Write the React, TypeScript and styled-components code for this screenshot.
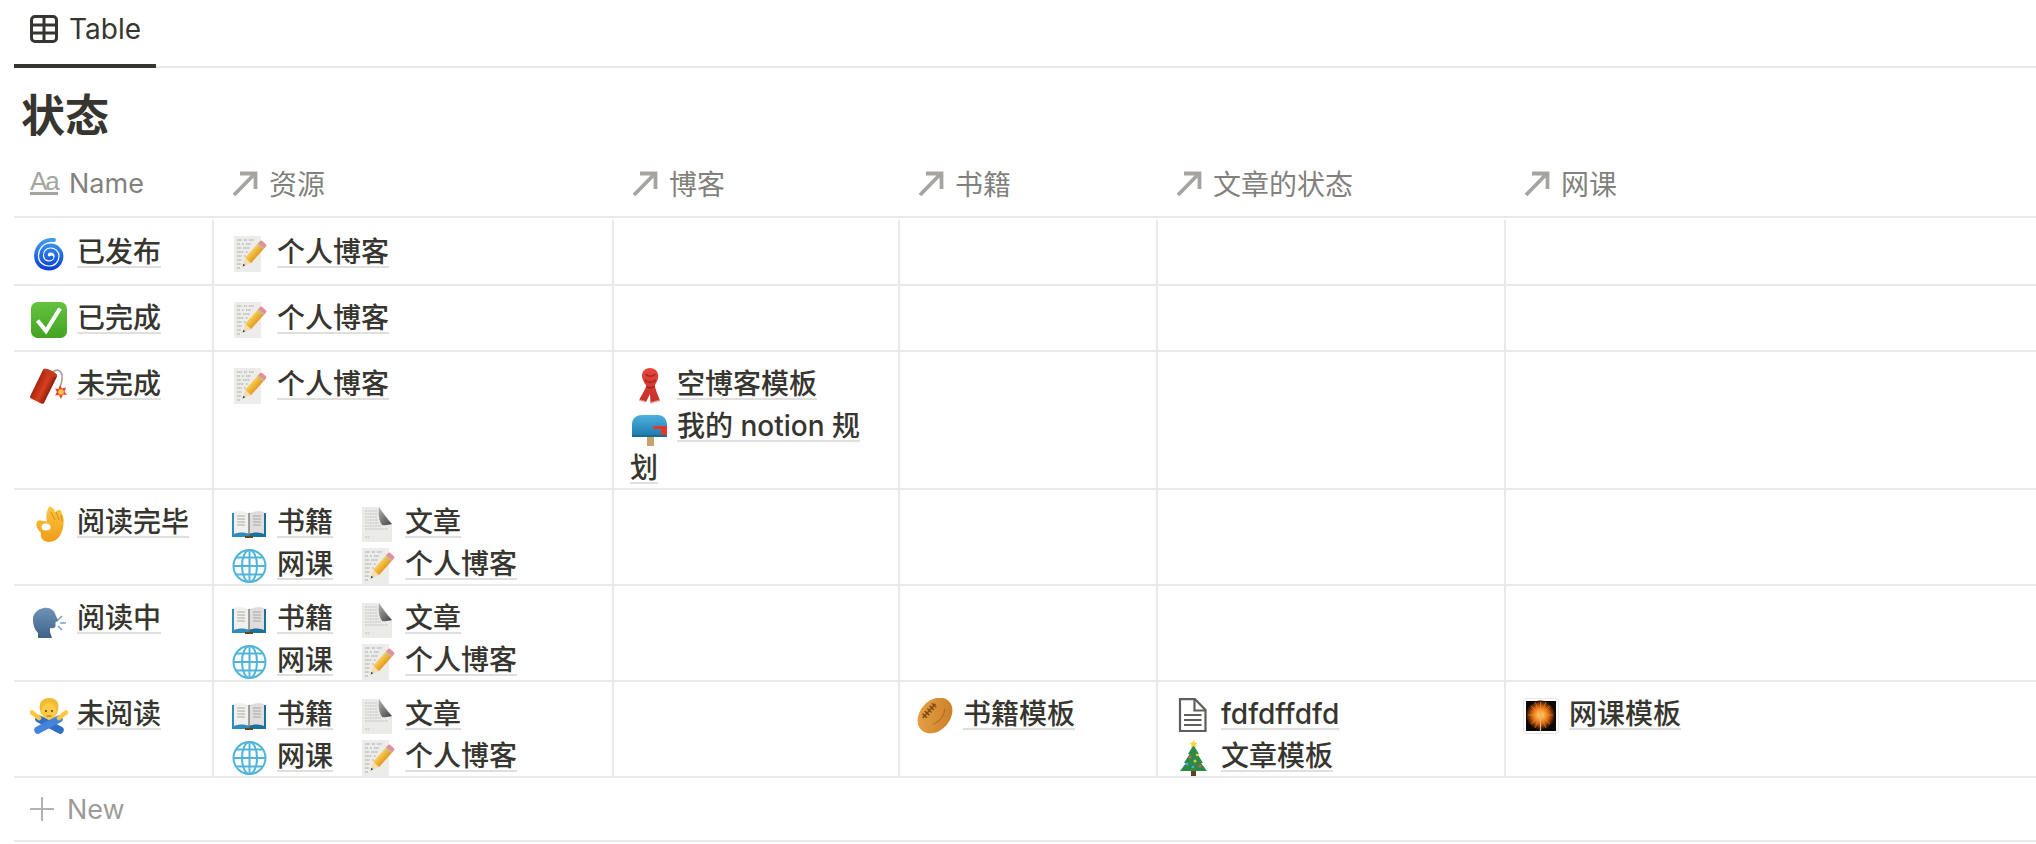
import React from "react";
import styled, { createGlobalStyle } from "styled-components";

const LINE = "#e9e9e7";
const COLS = "200px 400px 286px 258px 348px 1fr";

const Global = createGlobalStyle`
  html, body { margin: 0; padding: 0; background: #fff; }
  body {
    font-family: Inter, "Noto Sans CJK SC", "Noto Sans", sans-serif;
    color: #37352f;
    overflow: hidden;
  }
`;

const Page = styled.div`
  display: flex;
  flex-direction: column;
  padding-left: 14px;
`;

const TabBar = styled.div`
  display: flex;
  height: 68px;
  box-sizing: border-box;
  border-bottom: 2px solid ${LINE};
`;

const Tab = styled.div`
  display: flex;
  align-items: center;
  gap: 11px;
  width: 142px;
  height: 68px;
  box-sizing: border-box;
  padding: 0 0 7px 16px;
  border-bottom: 4px solid #37352f;
  font-size: 28px;
  line-height: 36px;
`;

const Title = styled.h1`
  margin: 0;
  padding: 22px 0 10px 7px;
  font-size: 44px;
  line-height: 52px;
  font-weight: 700;
`;

const HeaderRow = styled.div`
  display: grid;
  grid-template-columns: ${COLS};
  height: 66px;
  box-sizing: border-box;
  border-bottom: 2px solid ${LINE};
`;

const HeaderCell = styled.div<{ $latin?: boolean }>`
  display: flex;
  align-items: center;
  gap: 11px;
  padding: 0 16px;
  height: 62px;
  font-size: ${(p) => (p.$latin ? "27px" : "28px")};
  color: rgba(55, 53, 47, 0.65);
`;

const AaMark = styled.span`
  display: block;
  width: 28px;
  height: 24px;
  box-sizing: border-box;
  border-bottom: 3px solid #a5a4a0;
  color: #a5a4a0;
  font-size: 26px;
  line-height: 20px;
  letter-spacing: -2px;
  font-family: "Liberation Sans", sans-serif;
`;

const Body = styled.div`
  margin-top: 2px;
`;

const Row = styled.div`
  display: grid;
  grid-template-columns: ${COLS};
  min-height: 66px;
  box-sizing: border-box;
  border-bottom: 2px solid ${LINE};
`;

const Cell = styled.div<{ $last?: boolean }>`
  box-sizing: border-box;
  padding: 11px 16px 0;
  border-right: ${(p) => (p.$last ? "none" : `2px solid ${LINE}`)};
  font-size: 28px;
  line-height: 42px;
  font-weight: 500;
  min-width: 0;
`;

const Items = styled.div<{ $grid?: boolean }>`
  margin-bottom: -1px;
  display: ${(p) => (p.$grid ? "grid" : "block")};
  grid-template-columns: auto auto;
  justify-content: start;
  column-gap: 25px;
`;

const Item = styled.div`
  display: block;
  white-space: normal;
`;

const EmojiBox = styled.span`
  display: inline-block;
  width: 38px;
  height: 36px;
  margin-right: 9px;
  vertical-align: -10px;
  svg { display: block; }
`;

const Label = styled.span`
  text-decoration: underline;
  text-decoration-color: rgba(55, 53, 47, 0.16);
  text-decoration-thickness: 2px;
  text-underline-offset: 4px;
  text-decoration-skip-ink: none;
`;

const NewRow = styled.div`
  display: flex;
  align-items: center;
  gap: 13px;
  height: 64px;
  box-sizing: border-box;
  padding: 0 16px 0;
  border-bottom: 2px solid ${LINE};
  font-size: 27px;
  color: rgba(55, 53, 47, 0.5);
`;

const Svg = ({ children }: { children: React.ReactNode }) => (
  <svg width="38" height="36" viewBox="0 0 38 36" fill="none">{children}</svg>
);

const TableIcon = () => (
  <svg width="28" height="28" viewBox="0 0 28 28" fill="none" stroke="#37352f" strokeWidth="3">
    <rect x="1.5" y="1.5" width="25" height="25" rx="3.5" />
    <path d="M1.5 10H26.5M1.5 18H26.5M14 1.5V26.5" />
  </svg>
);

const ArrowIcon = () => (
  <svg width="28" height="28" viewBox="0 0 28 28" fill="none" stroke="#a5a4a0" strokeWidth="3.800">
    <path d="M4 26L24.500 5M10 4.500H25.500V20" />
  </svg>
);

const PlusIcon = () => (
  <svg width="24" height="24" viewBox="0 0 24 24" fill="none" stroke="#b3b2af" strokeWidth="2" style={{ flex: "none" }}>
    <path d="M0 12H24M12 0V24" />
  </svg>
);

const Spiral = () => (
  <Svg>
    <defs>
      <linearGradient id="sp" x1="0" y1="0" x2="0" y2="1">
        <stop offset="0" stopColor="#3f9bf2" />
        <stop offset="1" stopColor="#0b43d6" />
      </linearGradient>
    </defs>
    <path
      d="M24 4C14 3 6 10 6 20C6 28 12 32.500 19 32.500C27 32.500 31.500 26.500 31.500 20C31.500 13.500 26 9.500 20.500 9.500C14.500 9.500 11 14.500 11 19.500C11 24.500 15 27.500 19 27.500C23.500 27.500 26.500 24 26.500 20.500C26.500 16.500 23.500 14.500 20.500 14.500C17.500 14.500 15.500 17 16 19.800C16.500 22.300 19.500 23.300 21.500 21.500"
      stroke="url(#sp)"
      strokeWidth="3.800"
      strokeLinecap="round"
    />
  </Svg>
);

const Check = () => (
  <Svg>
    <defs>
      <linearGradient id="ck" x1="0" y1="0" x2="0" y2="1">
        <stop offset="0" stopColor="#63c23f" />
        <stop offset="1" stopColor="#44a322" />
      </linearGradient>
    </defs>
    <rect x="1" y="0" width="36" height="36" rx="6.500" fill="url(#ck)" />
    <path d="M7.500 18.500L16 29L30 6.500" stroke="#fff" strokeWidth="4.200" />
  </Svg>
);

const Dynamite = () => (
  <Svg>
    <defs>
      <linearGradient id="dy" x1="0" y1="0" x2="1" y2="0">
        <stop offset="0" stopColor="#a82510" />
        <stop offset="0.55" stopColor="#d8401e" />
        <stop offset="1" stopColor="#8f1d0c" />
      </linearGradient>
    </defs>
    <path d="M22 5C26 0 31 2 32 7C32.500 11 31.500 15 30 19" stroke="#a9a39c" strokeWidth="1.600" />
    <g transform="rotate(26 14 18)">
      <rect x="6" y="2" width="15.500" height="33" rx="2.500" fill="url(#dy)" />
      <ellipse cx="13.700" cy="3.500" rx="7.700" ry="2.600" fill="#c13a1c" />
    </g>
    <path d="M30 17L32 20.500L36 19.500L34.500 23.500L37 27L33 26.500L31 31L29 27L25 27.500L27 24L25 20.500L28.500 21Z" fill="#e8442a" />
    <circle cx="31" cy="24" r="2.800" fill="#f9c74a" />
  </Svg>
);

const Memo = () => (
  <Svg>
    <defs>
      <linearGradient id="pn" x1="0" y1="0" x2="1" y2="0">
        <stop offset="0" stopColor="#f7ce5a" />
        <stop offset="1" stopColor="#e49a1e" />
      </linearGradient>
    </defs>
    <rect x="4" y="0" width="27" height="36" fill="#ececea" />
    <path
      d="M7 4H12M14 4H17M19 4H24M7 8H10M12 8H14M16 8H21M7 12H11M13 12H20M7 16H14M16 16H18M7 20H12M14 20H16M7 24H12M7 28H11M7 32H10"
      stroke="#8a8882"
      strokeWidth="0.800"
      strokeDasharray="1.500 0.700"
    />
    <g transform="rotate(42 22 20)">
      <rect x="18" y="6" width="8" height="20" fill="url(#pn)" />
      <rect x="18" y="2" width="8" height="5" rx="1.500" fill="#e88f8f" />
      <rect x="18" y="6" width="8" height="1.500" fill="#b9b9b9" />
      <path d="M18 26H26L22 34Z" fill="#f2dcb0" />
      <path d="M20.800 31.500H23.200L22 34Z" fill="#333" />
    </g>
  </Svg>
);

const Scarf = () => (
  <Svg>
    <defs>
      <linearGradient id="sc" x1="0" y1="0" x2="0" y2="1">
        <stop offset="0" stopColor="#e5483c" />
        <stop offset="1" stopColor="#c42c28" />
      </linearGradient>
    </defs>
    <path d="M13 12C10 5 14 0 20 0C26 0 30 5 27.500 12C26 15.500 24.500 17 25 19L27 25L30 32.500L20.500 35L20 26L16 34L9 32L14 23L16.500 18C15 16 14 14.500 13 12Z" fill="url(#sc)" />
    <path d="M15.500 6C18 9 23 9 25.500 6M15 12C18 15 23 15 26 12" stroke="#a92420" strokeWidth="1.300" />
    <path d="M16.500 18.500C18.500 20 22 20 25 18.500" stroke="#9a1f1c" strokeWidth="1.200" />
    <path d="M9 32L16 34M20.500 35L30 32.500" stroke="#eeb4a8" strokeWidth="2.200" strokeDasharray="1 0.800" />
  </Svg>
);

const Mailbox = () => (
  <Svg>
    <defs>
      <linearGradient id="mb" x1="0" y1="0" x2="0" y2="1">
        <stop offset="0" stopColor="#4fb0dc" />
        <stop offset="1" stopColor="#1a78ac" />
      </linearGradient>
    </defs>
    <rect x="17" y="26" width="7" height="10" fill="#c7a46c" />
    <path d="M2 14C2 8 7 5 12 5H28C33 5 37 9 37 15V27H2Z" fill="url(#mb)" />
    <path d="M23 16H37V25H31V19H23Z" fill="#e8352a" />
    <path d="M2 25H37V27H2Z" fill="#176b98" />
  </Svg>
);

const OkHand = () => (
  <Svg>
    <defs>
      <linearGradient id="ok" x1="0" y1="0" x2="0" y2="1">
        <stop offset="0" stopColor="#fbc63e" />
        <stop offset="1" stopColor="#ee9c1b" />
      </linearGradient>
    </defs>
    <path
      d="M19 1C22 0 24 3 25 6L28 4C30 3 32 5 31.500 7C33.500 10 34 14 33.500 18C33 27 28 36 19 36C13 36 10 32 11 27C8 24 5.500 20 6.500 17C7 15 9 14 11 14.500L17 15.500C15.500 11 16.500 5 19 1Z"
      fill="url(#ok)"
    />
    <ellipse cx="16" cy="21" rx="4.500" ry="3.500" fill="#fff" />
    <path d="M21 6L25 14M26 6L29 14M31 9L32 15" stroke="#d78a17" strokeWidth="1" />
  </Svg>
);

const Book = () => (
  <Svg>
    <path d="M2 7H19V31H2Z" fill="#2f8cbd" />
    <path d="M19 7H36V31H19Z" fill="#1d6f9f" />
    <path d="M4 6C9 4 15 5 19 8V28C15 26 9 26 4 28Z" fill="#f1f0ec" />
    <path d="M34 6C29 4 23 5 19 8V28C23 26 29 26 34 28Z" fill="#dfdedc" />
    <path d="M7 10H15M7 13H15M7 16H15M7 19H15M23 10H31M23 13H31M23 16H31M23 19H31" stroke="#9a9a98" strokeWidth="0.800" />
    <path d="M19 8V30" stroke="#6d6a66" strokeWidth="1.200" />
    <path d="M15 30H23V32H15Z" fill="#5c4a1e" />
  </Svg>
);

const DocCurl = () => (
  <Svg>
    <defs>
      <linearGradient id="dc" x1="0" y1="0" x2="1" y2="1">
        <stop offset="0" stopColor="#b5b5b5" />
        <stop offset="0.6" stopColor="#6d6d6d" />
        <stop offset="1" stopColor="#444" />
      </linearGradient>
    </defs>
    <path d="M4 1H21L34 18V36H4Z" fill="#eaeae9" />
    <path d="M21 1C20 8 21 15 24 19C27 19.500 31 19 34 18C29 13 25 7 21 1Z" fill="url(#dc)" />
    <path d="M7 5H19M7 8H19M7 11H19M7 14H20M7 17H21M7 20H23M7 23H30M7 31H12" stroke="#c4c4c2" strokeWidth="1" strokeDasharray="2 0.500" />
  </Svg>
);

const Globe = () => (
  <Svg>
    <g stroke="#4fb4da" strokeWidth="2">
      <circle cx="19.500" cy="18" r="16" />
      <ellipse cx="19.500" cy="18" rx="7.500" ry="16" />
      <path d="M19.500 2V34M3.500 18H35.500M6 9.500H33M6 26.500H33" />
    </g>
  </Svg>
);

const SpeakingHead = () => (
  <Svg>
    <defs>
      <linearGradient id="sh" x1="0" y1="0" x2="0" y2="1">
        <stop offset="0" stopColor="#6f93b8" />
        <stop offset="1" stopColor="#3f6188" />
      </linearGradient>
    </defs>
    <path
      d="M14 6C20 5 25 9 25.500 13L28.500 19L25.500 20V24C25.500 26 23 26.500 20 26V30L22 36H8V31C5 28 3 24 3 17C3 11 8 7 14 6Z"
      fill="url(#sh)"
    />
    <path d="M32 14L28 18M30 21H36M32 28L28 24" stroke="#7fa0c3" strokeWidth="1.600" />
  </Svg>
);

const PersonX = () => (
  <Svg>
    <path d="M10 12C8 3 14 0 19 0C25 0 30 3 28 12L27 16H11Z" fill="#f3bb33" />
    <ellipse cx="19" cy="13.500" rx="7.500" ry="8.500" fill="#fdcb45" />
    <circle cx="16" cy="13" r="1" fill="#5b3a16" />
    <circle cx="22" cy="13" r="1" fill="#5b3a16" />
    <path d="M16.500 18H21.500" stroke="#a9651c" strokeWidth="1" />
    <path d="M9 21L30 32" stroke="#2f6fc8" strokeWidth="7.500" strokeLinecap="round" />
    <path d="M29 21L8 32" stroke="#4484da" strokeWidth="7.500" strokeLinecap="round" />
    <path d="M2 14.500L9 20" stroke="#fcc63f" strokeWidth="4.500" strokeLinecap="round" />
    <path d="M36 14.500L29 20" stroke="#fcc63f" strokeWidth="4.500" strokeLinecap="round" />
  </Svg>
);

const Football = () => (
  <Svg>
    <defs>
      <linearGradient id="fb" x1="0" y1="0" x2="1" y2="1">
        <stop offset="0" stopColor="#eba74a" />
        <stop offset="1" stopColor="#c67a22" />
      </linearGradient>
    </defs>
    <g transform="rotate(-48 19 17.500)">
      <ellipse cx="19" cy="17.500" rx="20" ry="15" fill="url(#fb)" />
      <path d="M9 10H28M12 7V13M15.500 7V13M19 7V13M22.500 7V13M26 7V13" stroke="#7e4a16" strokeWidth="1.500" />
      <path d="M11 22C17 25 25 25 31 20" stroke="#b46d1d" strokeWidth="1" />
    </g>
  </Svg>
);

const DocOutline = () => (
  <Svg>
    <g stroke="#5f5e5b" strokeWidth="2.200">
      <path d="M6 1.200H21L31.500 12V33H6Z" />
      <path d="M20.500 1.200V12.500H31.500" />
      <path d="M10 17H27.500M10 22H27.500M10 27H27.500" />
    </g>
  </Svg>
);

const Tree = () => (
  <Svg>
    <path d="M17 30H22V36H17Z" fill="#6a3d1f" />
    <path d="M19.500 5L25 14L23.500 14L29 23L27 23L33 31H6L12 23L10 23L15.500 14L14 14Z" fill="#2c8a47" />
    <path d="M19.500 0L20.700 2.500L23.500 3L21.300 4.800L22 7.500L19.500 6L17 7.500L17.700 4.800L15.500 3L18.300 2.500Z" fill="#f6d23b" />
    <circle cx="16" cy="17" r="1.500" fill="#e2574c" />
    <circle cx="23" cy="15" r="1.300" fill="#f0c33c" />
    <circle cx="21" cy="21" r="1.500" fill="#f0c33c" />
    <circle cx="13" cy="24" r="1.500" fill="#4fa3e0" />
    <circle cx="26" cy="26" r="1.500" fill="#e2574c" />
    <circle cx="19" cy="27" r="1.300" fill="#4fa3e0" />
  </Svg>
);

const Sparkler = () => (
  <Svg>
    <defs>
      <radialGradient id="sk">
        <stop offset="0" stopColor="#fff6d6" />
        <stop offset="0.25" stopColor="#ffb23c" />
        <stop offset="0.6" stopColor="#d9600f" />
        <stop offset="1" stopColor="#1a0a04" />
      </radialGradient>
    </defs>
    <rect x="1.500" y="0.500" width="35" height="35" rx="2" fill="#fff" stroke="#e6e6e4" />
    <rect x="4" y="3" width="30" height="30" fill="#0d0705" />
    <circle cx="18.500" cy="17" r="14.500" fill="url(#sk)" />
    <path d="M18.500 4V30M6 17H31M9 8L28 26M28 8L9 26M13 4L24 30M24 4L13 30" stroke="#f29a36" strokeWidth="0.700" opacity="0.800" />
    <path d="M18.500 17V33" stroke="#d9b58a" strokeWidth="1.200" />
  </Svg>
);

type PageRef = { icon: React.ReactNode; label: string };

const memo: PageRef = { icon: <Memo />, label: "个人博客" };
const book: PageRef = { icon: <Book />, label: "书籍" };
const article: PageRef = { icon: <DocCurl />, label: "文章" };
const course: PageRef = { icon: <Globe />, label: "网课" };
const four = [book, article, course, memo];

type RowData = {
  name: PageRef;
  res: PageRef[];
  blog?: PageRef[];
  books?: PageRef[];
  articles?: PageRef[];
  courses?: PageRef[];
};

const rows: RowData[] = [
  { name: { icon: <Spiral />, label: "已发布" }, res: [memo] },
  { name: { icon: <Check />, label: "已完成" }, res: [memo] },
  {
    name: { icon: <Dynamite />, label: "未完成" },
    res: [memo],
    blog: [
      { icon: <Scarf />, label: "空博客模板" },
      { icon: <Mailbox />, label: "我的 notion 规划" },
    ],
  },
  { name: { icon: <OkHand />, label: "阅读完毕" }, res: four },
  { name: { icon: <SpeakingHead />, label: "阅读中" }, res: four },
  {
    name: { icon: <PersonX />, label: "未阅读" },
    res: four,
    books: [{ icon: <Football />, label: "书籍模板" }],
    articles: [
      { icon: <DocOutline />, label: "fdfdffdfd" },
      { icon: <Tree />, label: "文章模板" },
    ],
    courses: [{ icon: <Sparkler />, label: "网课模板" }],
  },
];

const PageList = ({ items = [], grid }: { items?: PageRef[]; grid?: boolean }) => (
  <Items $grid={grid}>
    {items.map((it) => (
      <Item key={it.label}>
        <EmojiBox>{it.icon}</EmojiBox>
        <Label>{it.label}</Label>
      </Item>
    ))}
  </Items>
);

const headers = ["资源", "博客", "书籍", "文章的状态", "网课"];

export default function App() {
  return (
    <Page>
      <Global />
      <TabBar>
        <Tab>
          <TableIcon />
          <span>Table</span>
        </Tab>
      </TabBar>
      <Title>状态</Title>
      <HeaderRow>
        <HeaderCell $latin>
          <AaMark>Aa</AaMark>
          <span>Name</span>
        </HeaderCell>
        {headers.map((h) => (
          <HeaderCell key={h}>
            <ArrowIcon />
            <span>{h}</span>
          </HeaderCell>
        ))}
      </HeaderRow>
      <Body>
        {rows.map((r) => (
          <Row key={r.name.label}>
            <Cell><PageList items={[r.name]} /></Cell>
            <Cell><PageList items={r.res} grid={r.res.length > 1} /></Cell>
            <Cell><PageList items={r.blog} /></Cell>
            <Cell><PageList items={r.books} /></Cell>
            <Cell><PageList items={r.articles} /></Cell>
            <Cell $last><PageList items={r.courses} /></Cell>
          </Row>
        ))}
      </Body>
      <NewRow>
        <PlusIcon />
        <span>New</span>
      </NewRow>
    </Page>
  );
}
